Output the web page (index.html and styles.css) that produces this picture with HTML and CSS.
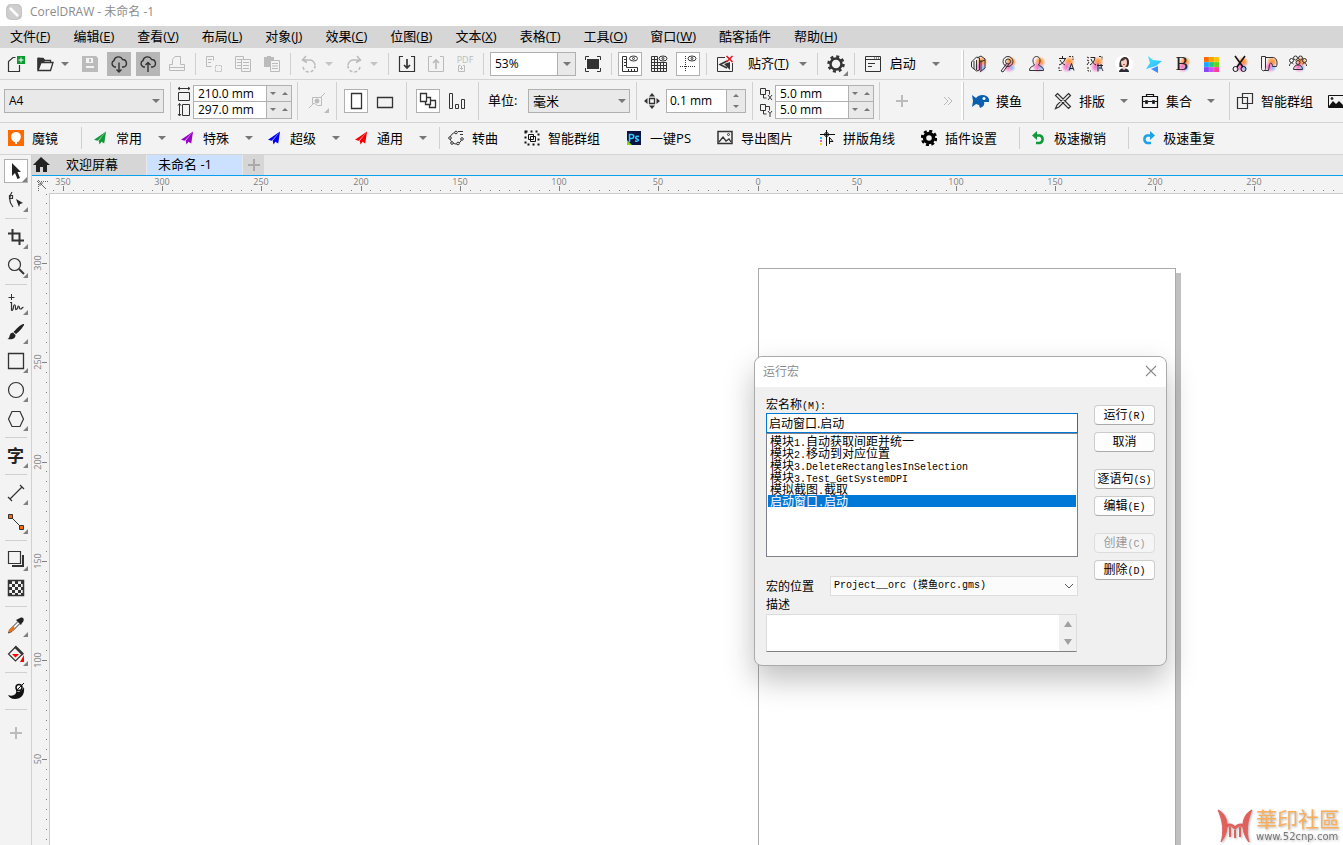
FILE: index.html
```html
<!DOCTYPE html>
<html lang="zh-CN">
  <head>
    <meta charset="utf-8">
    <title>CorelDRAW - 未命名 -1</title>
    <meta name="viewport" content="width=device-width, initial-scale=1.0">
    <link rel="stylesheet" href="styles.css">
  </head>
  <body>
    <svg class="defs" width="0" height="0">
      <defs>
        <radialGradient id="orange"><stop offset="0" stop-color="#ff8a1c"/><stop offset="0.5" stop-color="#ff9c4a" stop-opacity="0.8"/><stop offset="1" stop-color="#ffc08a" stop-opacity="0"/></radialGradient>
        <radialGradient id="pink"><stop offset="0" stop-color="#ff5fb0"/><stop offset="0.5" stop-color="#ff7fd0" stop-opacity="0.7"/><stop offset="1" stop-color="#ff9ce0" stop-opacity="0"/></radialGradient>
        <radialGradient id="blue"><stop offset="0" stop-color="#7cc0ff"/><stop offset="1" stop-color="#b0dcff" stop-opacity="0"/></radialGradient>
        <linearGradient id="sky" x1="0" y1="0" x2="1" y2="1"><stop offset="0" stop-color="#3fe8ff"/><stop offset="1" stop-color="#35b4ff"/></linearGradient>
        <g id="glow">
          <circle cx="12" cy="7" r="6" fill="url(#orange)" stroke="none"/>
          <circle cx="10" cy="12" r="6" fill="url(#pink)" stroke="none"/>
          <circle cx="13" cy="13" r="4" fill="url(#blue)" stroke="none"/>
        </g>
      </defs>
    </svg>

    <header class="title-bar">
      <svg width="16" height="16" viewBox="0 0 16 16"><rect width="16" height="16" rx="5" fill="#c4c4c4"/><path d="M1 12V5l3-4h7l4 3v7l-4 4H5z" fill="#cfcfcf"/><path d="M4 4l8 8" stroke="#fff" stroke-width="2.5"/></svg>
      <h1>CorelDRAW - 未命名 -1</h1>
    </header>

    <nav class="menu">
      <a href="#">文件(<u>F</u>)</a>
      <a href="#">编辑(<u>E</u>)</a>
      <a href="#">查看(<u>V</u>)</a>
      <a href="#">布局(<u>L</u>)</a>
      <a href="#">对象(<u>J</u>)</a>
      <a href="#">效果(<u>C</u>)</a>
      <a href="#">位图(<u>B</u>)</a>
      <a href="#">文本(<u>X</u>)</a>
      <a href="#">表格(<u>T</u>)</a>
      <a href="#">工具(<u>O</u>)</a>
      <a href="#">窗口(<u>W</u>)</a>
      <a href="#">酷客插件</a>
      <a href="#">帮助(<u>H</u>)</a>
    </nav>

    <!-- standard toolbar -->
    <div class="toolbar">
      <button class="tool" aria-label="新建"><svg class="icon" viewBox="0 0 18 18"><path d="M8.500 2.500H6L1.500 6.500V16.500H12.500V10" stroke-width="1.200"/><rect x="10" y="1" width="8" height="8" fill="#0a9a2f" stroke="none"/><path d="M14 2.500v5M11.500 5h5" stroke="#fff"/></svg></button>
      <button class="tool" aria-label="打开"><svg class="icon" viewBox="0 0 18 18"><path d="M2 15V3.500h5l1.500 2h6V7" stroke-width="1.300"/><path d="M2 15.500L5 7.500h12L14.500 15.500z" stroke-width="1.300"/><path d="M2 3v11l3-7h3V4z" fill="#333"/></svg></button>
      <button class="drop" aria-label="打开选项"></button>
      <button class="tool off" aria-label="保存"><svg class="icon" viewBox="0 0 18 18"><path d="M1 1h14l2 2v14H1z" fill="#bbb" stroke="none"/><path d="M5 3h7v5H5zM5 11h8v6H5z" fill="#f3f3f3" stroke="none"/><path d="M9 4v3" stroke="#bbb" stroke-width="2"/><path d="M5 13h8v4H5z" fill="#bbb" stroke="none"/></svg></button>
      <button class="tool pressed" aria-label="从云下载"><svg class="icon" viewBox="0 0 18 18"><path d="M6 12H4.500A3.500 3.500 0 0 1 4 5.500 4.500 4.500 0 0 1 12.500 4.500 3.800 3.800 0 0 1 13.500 12H12M9 7.500V17M6.500 14.500L9 17l2.500-2.500" stroke-width="1.400"/></svg></button>
      <button class="tool pressed" aria-label="保存到云"><svg class="icon" viewBox="0 0 18 18"><path d="M6 12H4.500A3.500 3.500 0 0 1 4 5.500 4.500 4.500 0 0 1 12.500 4.500 3.800 3.800 0 0 1 13.500 12H12M9 17V7.500M6.500 10L9 7.500l2.500 2.500" stroke-width="1.400"/></svg></button>
      <button class="tool off" aria-label="打印"><svg class="icon" viewBox="0 0 18 18"><path d="M4.500 9.500v-5l2.500-3h5.500v8h4v6h-15v-6zM1.500 12.500h15"/></svg></button>
      <span class="sep"></span>
      <button class="tool off" aria-label="剪切"><svg class="icon" viewBox="0 0 18 18"><path d="M1.500 1.500h7v4M1.500 1.500v10h5M3 4.500h4M3 7.500h3"/><path d="M10.500 10.500h6v6h-6z" stroke-dasharray="2 1"/></svg></button>
      <button class="tool off" aria-label="复制"><svg class="icon" viewBox="0 0 18 18"><path d="M7.500 13.500h-6v-12h8v3M3 4.500h5M3 7.500h4M3 10.500h4M7.500 4.500h9v12h-9zM9 7.500h6M9 10.500h6M9 13.500h6"/></svg></button>
      <button class="tool off" aria-label="粘贴"><svg class="icon" viewBox="0 0 18 18"><path d="M1 2h3V1h4v1h3v4H7v6H1z" fill="#bbb" stroke="none"/><path d="M7.500 5.500h9v11h-9zM9 8.500h6M9 11h6M9 13.500h6"/></svg></button>
      <span class="sep"></span>
      <button class="tool off" aria-label="撤销"><svg class="icon" viewBox="0 0 18 18"><path d="M6 1L2.500 5 7 7.500M3 5h6a5.500 5.500 0 0 1 6 5" stroke-width="1.500"/><path d="M15 10.500a6 6 0 0 1-12 1" stroke-width="1.500" stroke-dasharray="3 2"/></svg></button>
      <button class="drop off" aria-label="撤销列表"></button>
      <button class="tool off" aria-label="重做"><svg class="icon" viewBox="0 0 18 18"><path d="M12 1l3.500 4L11 7.500M15 5H9a5.500 5.500 0 0 0-6 5" stroke-width="1.500"/><path d="M3 10.500a6 6 0 0 0 12 1" stroke-width="1.500" stroke-dasharray="3 2"/></svg></button>
      <button class="drop off" aria-label="重做列表"></button>
      <span class="sep"></span>
      <button class="tool" aria-label="导入"><svg class="icon" viewBox="0 0 18 18"><path d="M5 1.500H1.500v15h15v-15H13" stroke-width="1.200"/><path d="M9 4v9M6 10l3 3 3-3" stroke-width="1.700"/></svg></button>
      <button class="tool off" aria-label="导出"><svg class="icon" viewBox="0 0 18 18"><path d="M5 1.500H1.500v15h15v-15H13"/><path d="M9 14V5M6 8l3-3 3 3" stroke-width="1.700"/></svg></button>
      <button class="tool off pdf" aria-label="发布为 PDF"><span>PDF</span><svg class="icon" viewBox="0 0 18 9"><path d="M4.500 1.500H2.500v6h6v-6H7M5.500 6V2M4 4.500h3"/></svg></button>
      <span class="sep"></span>
      <div class="zoom-box">
        <input type="text" value="53%" aria-label="缩放级别">
        <button class="drop" aria-label="缩放列表"></button>
      </div>
      <button class="tool" aria-label="全屏预览"><svg class="icon" viewBox="0 0 18 18"><rect x="3" y="4" width="12" height="10" fill="#333" stroke="none"/><path d="M1.500 5V1.500H5M13 1.500h3.500V5M1.500 13v3.500H5M13 16.500h3.500V13"/></svg></button>
      <span class="sep"></span>
      <button class="tool boxed" aria-label="显示标尺"><svg class="icon" viewBox="0 0 18 18"><path d="M1.500 1.500h4v11h11v4h-15zM3 4.500h2M3 7.500h2M3 10.500h2M7.500 14v2M10.500 14v2M13.500 14v2"/><ellipse cx="12.500" cy="3.500" rx="4" ry="2.500"/><circle cx="12.500" cy="3.500" r="1"/></svg></button>
      <button class="tool" aria-label="显示网格"><svg class="icon" viewBox="0 0 18 18"><path d="M1.500 1.500v15h15v-9M4.500 1.500v15M7.500 1.500v15M10.500 7v10M13.500 7v10M1.500 1.500h6M1.500 4.500h6M1.500 7.500h15M1.500 10.500h15M1.500 13.500h15"/><ellipse cx="13" cy="3.500" rx="4" ry="2.500"/><circle cx="13" cy="3.500" r="1"/></svg></button>
      <button class="tool boxed" aria-label="显示辅助线"><svg class="icon" viewBox="0 0 18 18"><path d="M6.500 1v16M1 11.500h16" stroke-dasharray="1 1"/><ellipse cx="13" cy="3.500" rx="4" ry="2.500"/><circle cx="13" cy="3.500" r="1"/></svg></button>
      <span class="sep"></span>
      <button class="tool" aria-label="贴齐关闭"><svg class="icon" viewBox="0 0 18 18"><path d="M9 2.500H1.500v14h15V8"/><path d="M11 6L4 9.500l7 3.500" stroke-width="1.500"/><path d="M8 9l6-2v8z" fill="#333" stroke="none"/><path d="M10.500 1l6 6M16.500 1l-6 6" stroke="#e8111d" stroke-width="1.500"/></svg></button>
      <button class="text snap">贴齐(<u>T</u>)</button>
      <button class="drop" aria-label="贴齐选项"></button>
      <span class="sep"></span>
      <button class="tool fly" aria-label="选项"><svg class="icon" viewBox="0 0 18 18"><circle cx="9" cy="9" r="5.500" stroke-width="2.500"/><circle cx="9" cy="9" r="7.500" stroke-width="2.500" stroke-dasharray="3 2.890"/></svg></button>
      <span class="sep"></span>
      <button class="tool" aria-label="启动器"><svg class="icon" viewBox="0 0 18 18"><path d="M1.500 1.500h15v15h-15zM1.500 4.500h15M4 8.500h7M4 11.500h4"/><path d="M10 3h1M12 3h1M14 3h1"/></svg></button>
      <button class="text launch">启动</button>
      <button class="drop" aria-label="启动选项"></button>
      <div class="dock">
        <button class="tool" aria-label="盒子"><svg class="icon" viewBox="0 0 18 18"><use href="#glow"/><path d="M1.500 7l5-5 3 1v12l-3 1-5-4zM4 6v8M6.500 5v10M7 3l4-2 4 3v9l-5 4M11 5v11M15 5l-5 2"/></svg></button>
        <button class="tool" aria-label="搜图"><svg class="icon" viewBox="0 0 18 18"><use href="#glow"/><circle cx="9" cy="6.500" r="5"/><circle cx="9" cy="6.500" r="2.500"/><path d="M8 8l-6 8 2 1 6-8"/></svg></button>
        <button class="tool" aria-label="头像"><svg class="icon" viewBox="0 0 18 18"><use href="#glow"/><path d="M6.500 10C4 7 4.500 1.500 8.500 1.500S13 7 10.500 10c0 1 5 1 5 5.500h-14c0-4.500 5-4.500 5-5.500z"/></svg></button>
        <button class="tool" aria-label="翻译"><svg class="icon" viewBox="0 0 18 18"><use href="#glow"/><path d="M2 3.500h7M5.500 1v2.500M8 4c-1 3-3 5-6 6M3 5c1 2 3 4 5 5M12 15.500l2.500-7 2.500 7M13 13.500h3" stroke="#222"/><path d="M2 12v3.500h3M12 1.500h4V5" stroke-dasharray="2 1"/></svg></button>
        <button class="tool" aria-label="汉字转换"><svg class="icon" viewBox="0 0 18 18"><use href="#glow"/><path d="M1 2l2 1M1 5l2 1M1 10l2-3M4.500 2.500H9C8.500 6 7 8 4 10M5 4c1 3 3 5 5 6M11 10.500h6M12 8.500v8M15 9c0 3 1 5 2 7M13 13h2" stroke="#222"/><path d="M2 12v4h3M13 1.500h3V5" stroke-dasharray="2 1"/></svg></button>
        <button class="tool" aria-label="人像"><svg class="icon" viewBox="0 0 18 18"><circle cx="9" cy="9" r="9" fill="#fff" stroke="none"/><path d="M4.500 12C3 0 15-1 14 8c0 2-1 4-2 4z" fill="#3a2b2b" stroke="none"/><path d="M4 17c0-5 10-5 10 0z" fill="#2b2b35" stroke="none"/><path d="M8 10h2.500v4L9 15l-1.500-1z" fill="#f3cdbf" stroke="none"/><ellipse cx="9" cy="7.500" rx="3" ry="4" fill="#f3cdbf" stroke="none"/><path d="M6 6c2 0 4-1 4.500-3L6 4z" fill="#3a2b2b" stroke="none"/><path d="M8 9.500h2" stroke="#d0505a"/></svg></button>
        <button class="tool" aria-label="飞鸟"><svg class="icon" viewBox="0 0 18 18"><path d="M4 1l5 4 9 1-6 5-10 3 4-6z" fill="url(#sky)" stroke="none"/><path d="M7 14l7-3 0 7z" fill="#3f8cff" stroke="none"/></svg></button>
        <button class="tool bold-b" aria-label="加粗"><span>B</span><svg class="icon" viewBox="0 0 18 18"><use href="#glow"/></svg></button>
        <button class="tool" aria-label="色板"><svg class="icon" viewBox="0 0 18 18"><g stroke="none"><path d="M2 2h5v5H2z" fill="#ff6a00"/><path d="M7 2h5v5H7z" fill="#ffa200"/><path d="M12 2h5v5h-5z" fill="#ffc400"/><path d="M2 7h5v5H2z" fill="#1aa8ff"/><path d="M7 7h5v5H7z" fill="#1ecb7a"/><path d="M12 7h5v5h-5z" fill="#62d21c"/><path d="M2 12h5v5H2z" fill="#8b45ff"/><path d="M7 12h5v5H7z" fill="#d44cff"/><path d="M12 12h5v5h-5z" fill="#ff3d9a"/></g><path d="M7 2v15M12 2v15M2 7h15M2 12h15" stroke="#fff" stroke-opacity="0.400" stroke-width="0.500"/></svg></button>
        <button class="tool" aria-label="裁剪"><svg class="icon" viewBox="0 0 18 18"><use href="#glow"/><path d="M4 1l8 11M14 1L6 12" stroke="#111" stroke-width="1.600"/><circle cx="4.500" cy="14" r="2.500" stroke="#111"/><circle cx="12.500" cy="14" r="2.500" stroke="#111"/></svg></button>
        <button class="tool" aria-label="卷轴"><svg class="icon" viewBox="0 0 18 18"><use href="#glow"/><path d="M1.500 1.500h4v12c0 3-4 3-4 0zM5.500 2.500h8c4 1 4 6 3 9h-4c0-3-2-5-3-2l-1 6H4"/></svg></button>
        <button class="tool" aria-label="社群"><svg class="icon" viewBox="0 0 18 18"><use href="#glow"/><circle cx="2.500" cy="5.500" r="2"/><circle cx="15.500" cy="5.500" r="2"/><circle cx="6.500" cy="3" r="2"/><circle cx="11.500" cy="3" r="2"/><circle cx="9" cy="7.500" r="2"/><path d="M4.500 14.500c0-6 9-6 9 0zM0.500 11c0-3 2-4 4-2M17.500 11c0-3-2-4-4-2"/></svg></button>
      </div>
    </div>

    <!-- property bar -->
    <div class="toolbar property">
      <div class="combo paper">
        <select aria-label="页面大小"><option>A4</option></select>
      </div>
      <span class="sep"></span>
      <div class="pair">
        <label for="pageWidth"><svg class="icon" viewBox="0 0 14 16"><path d="M1 2.500h12M3 1L1 2.500 3 4M11 1l2 1.500L11 4M1.500 6.500h11v8h-11z"/></svg></label>
        <input type="text" id="pageWidth" value="210.0 mm">
        <div class="spin"><button class="down" aria-label="减小宽度"></button><button class="up" aria-label="增大宽度"></button></div>
        <label for="pageHeight"><svg class="icon" viewBox="0 0 14 16"><path d="M2.500 1.500v12M1 3.500l1.500-2L4 3.500M1 12l1.500 2L4 12M5.500 2.500h7v11h-7z"/></svg></label>
        <input type="text" id="pageHeight" value="297.0 mm">
        <div class="spin"><button class="down" aria-label="减小高度"></button><button class="up" aria-label="增大高度"></button></div>
      </div>
      <span class="sep"></span>
      <button class="tool off fly treat" aria-label="对象设置"><svg class="icon" viewBox="0 0 18 18"><path d="M4.500 5.500h9v8h-4l-3-2h-2zM1 16l4-4M13 5l4-4"/><circle cx="9" cy="9" r="2" fill="#bbb"/></svg></button>
      <span class="sep"></span>
      <button class="tool boxed portrait" aria-label="纵向"><svg class="icon" viewBox="0 0 18 18"><path d="M4.500 1.500h10v15h-10z" stroke-width="1.300"/></svg></button>
      <button class="tool" aria-label="横向"><svg class="icon" viewBox="0 0 18 18"><path d="M1.500 5.500h15v10h-15z" stroke-width="1.300"/></svg></button>
      <span class="sep group-end"></span>
      <button class="tool boxed" aria-label="所有页面"><svg class="icon" viewBox="0 0 18 18"><path d="M1.500 1.500h6v8h-6zM7.500 5.500h4v7h-5v-3M11.500 8.500h5v7h-6v-3" stroke-width="1.300"/></svg></button>
      <button class="tool" aria-label="当前页面"><svg class="icon" viewBox="0 0 18 18"><path d="M1.500 1.500h3v15h-3zM7.500 12.500h3v4h-3zM13.500 7.500h3v9h-3z"/></svg></button>
      <span class="sep group-end"></span>
      <label for="unit" class="unit-label">单位:</label>
      <div class="combo unit">
        <select id="unit"><option>毫米</option></select>
      </div>
      <span class="sep"></span>
      <label for="nudge" aria-label="微调距离"><svg class="icon" viewBox="0 0 18 18"><path d="M6.500 6.500h5v5h-5z" stroke-width="1.300"/><path d="M9 1L6 4.500h6zM9 17l-3-3.500h6zM1 9l3.500-3v6zM17 9l-3.500-3v6z" fill="#333" stroke="none"/></svg></label>
      <div class="nudge">
        <input type="text" id="nudge" value="0.1 mm">
        <div class="spin stacked"><button class="up" aria-label="增大微调"></button><button class="down" aria-label="减小微调"></button></div>
      </div>
      <span class="sep"></span>
      <div class="pair">
        <label for="dupX"><svg class="icon" viewBox="0 0 14 16"><path d="M1.500 2.500h5v6h-5zM7 4.500h3.500v4M4.500 9v3h3M9 9l4 5M13 9l-4 5"/></svg></label>
        <input type="text" id="dupX" value="5.0 mm">
        <div class="spin"><button class="down" aria-label="减小 X"></button><button class="up" aria-label="增大 X"></button></div>
        <label for="dupY"><svg class="icon" viewBox="0 0 14 16"><path d="M1.500 2.500h5v6h-5zM7 4.500h3.500v4M4.500 9v3h3M9 9l2 2.500L13 9M11 11.500V15"/></svg></label>
        <input type="text" id="dupY" value="5.0 mm">
        <div class="spin"><button class="down" aria-label="减小 Y"></button><button class="up" aria-label="增大 Y"></button></div>
      </div>
      <span class="sep"></span>
      <button class="tool off plus" aria-label="添加"><svg class="icon" viewBox="0 0 18 18"><path d="M9 3v12M3 9h12" stroke-width="2"/></svg></button>
      <button class="tool off more" aria-label="更多"><svg class="icon" viewBox="0 0 18 18"><path d="M5 5l4 4-4 4M9 5l4 4-4 4"/></svg></button>
      <div class="dock plugins">
        <button class="text"><svg class="icon" viewBox="0 0 18 18"><path d="M1 3l4 3c3-4 11-4 13 1v3h-5c1 3-1 5-4 6l-1-3-3-1-4 3 1-6z" fill="#0a5fae" stroke="none"/><circle cx="13" cy="6.500" r="1.500" fill="#fff" stroke="none"/></svg>摸鱼</button>
        <span class="sep fish-end"></span>
        <button class="text"><svg class="icon" viewBox="0 0 18 18"><path d="M3.500 1.500l13 13-2 2-13-13zM14.500 1.500l2 2L5 15l-3.500 1.500L3 13z" stroke-width="1.200"/></svg>排版</button>
        <button class="drop wide" aria-label="排版选项"></button>
        <button class="text"><svg class="icon" viewBox="0 0 18 18"><path d="M5.500 4.500v-2h7v2M1.500 4.500h15v11h-15zM1.500 9.500h15" stroke="#111" stroke-width="1.200"/><path d="M4.500 8.500h2v3h-2zM11.500 8.500h2v3h-2z" fill="#111"/></svg>集合</button>
        <button class="drop wide" aria-label="集合选项"></button>
        <span class="sep"></span>
        <button class="text"><svg class="icon" viewBox="0 0 18 18"><path d="M6.500 1.500h10v10h-10zM1.500 5.500h10v11h-10z" stroke-width="1.200"/></svg>智能群组</button>
        <button class="text picture" aria-label="图片"><svg class="icon" viewBox="0 0 18 18"><path d="M1.500 3.500h15v12h-15z" stroke="#111"/><path d="M2 14l4-5 3 3 3-3 5 5v1H2z" fill="#111" stroke="none"/><circle cx="5" cy="6.500" r="1" fill="#111"/></svg></button>
      </div>
    </div>

    <!-- plugin toolbar -->
    <div class="toolbar plugin">
      <button class="text"><svg class="icon" viewBox="0 0 16 16"><path d="M0 0h16v16H0z" fill="#ff6a00" stroke="none"/><path d="M8 2c5 0 7 6 2 10H6C1 8 3 2 8 2zM7 12h2v2H7z" fill="#fff" stroke="none"/></svg>魔镜</button>
      <span class="sep mirror-end"></span>
      <button class="text plane green"><svg viewBox="0 0 14 14"><path d="M13 0L0 9l4 1zM13 0L5 10l1 4 2-3 3 2z"/></svg>常用</button>
      <button class="drop wide" aria-label="常用选项"></button>
      <button class="text plane purple"><svg viewBox="0 0 14 14"><path d="M13 0L0 9l4 1zM13 0L5 10l1 4 2-3 3 2z"/></svg>特殊</button>
      <button class="drop wide" aria-label="特殊选项"></button>
      <button class="text plane navy"><svg viewBox="0 0 14 14"><path d="M13 0L0 9l4 1zM13 0L5 10l1 4 2-3 3 2z"/></svg>超级</button>
      <button class="drop wide" aria-label="超级选项"></button>
      <button class="text plane red"><svg viewBox="0 0 14 14"><path d="M13 0L0 9l4 1zM13 0L5 10l1 4 2-3 3 2z"/></svg>通用</button>
      <button class="drop wide" aria-label="通用选项"></button>
      <span class="sep"></span>
      <div class="actions">
        <button class="text"><svg class="icon" viewBox="0 0 16 16"><path d="M8 2.500a5.500 5.500 0 0 0 0 11.500 5.500 5.500 0 0 0 5.500-6M10 1.500h5M12 4.500h3"/><g fill="#fff"><circle cx="8" cy="2.500" r="1.300"/><circle cx="2" cy="8" r="1.300"/><circle cx="4" cy="13" r="1.300"/><circle cx="10" cy="13.500" r="1.300"/><circle cx="14" cy="9" r="1.300"/></g></svg>转曲</button>
        <button class="text"><svg class="icon" viewBox="0 0 16 16"><path d="M1.500 1.500h13v13h-13z" stroke="#111" stroke-width="2" stroke-dasharray="2 3"/><path d="M4.500 4.500h5v5h-5zM6.500 6.500h5v5h-5z" stroke="#111"/></svg>智能群组</button>
        <button class="text"><svg class="icon" viewBox="0 0 16 16"><path d="M1 1h14v14H1z" fill="#0b1440" stroke="none"/><path d="M1 10l5 5H1z" fill="#7ed321" stroke="none"/><path d="M3.500 12V4.500h2c3 0 3 4 0 4h-2M13 6.500c-4-1-4 2-2 2.500s2 3-2 2" stroke="#35c5ff" stroke-width="1.500"/></svg>一键PS</button>
        <button class="text"><svg class="icon" viewBox="0 0 16 16"><path d="M1 1.500h14v12H1z" stroke-width="1.500"/><path d="M2 12l4-5 3 4 3-2 2 3" stroke-width="1.300"/><circle cx="11.500" cy="4.500" r="1"/></svg>导出图片</button>
        <button class="text"><svg class="icon" viewBox="0 0 16 16"><path d="M7.500 0v16M1 4.500h15" stroke="#111"/><circle cx="7.500" cy="4.500" r="2" stroke="#111"/><path d="M10.500 7v7M10.500 7.500l3.500 4h-3" stroke="#111"/><path d="M1 7h2v2H1z" fill="#25c5e8" stroke="none"/><path d="M1 10h2v2H1z" fill="#f05ab0" stroke="none"/><path d="M1 13h2v2H1z" fill="#ffd21c" stroke="none"/></svg>拼版角线</button>
        <button class="text"><svg class="icon" viewBox="0 0 16 16"><circle cx="8" cy="8" r="4.500" stroke="#000" stroke-width="3.500"/><circle cx="8" cy="8" r="7" stroke="#000" stroke-width="2.500" stroke-dasharray="3 2.500"/></svg>插件设置</button>
      </div>
      <span class="sep fast"></span>
      <button class="text quick"><svg class="icon" viewBox="0 0 14 14"><path d="M2 4.500h6a4 4 0 0 1 0 7.500H4" stroke="#119a3b" stroke-width="2.500"/><path d="M0 4.500L5 0v9z" fill="#119a3b" stroke="none"/></svg>极速撤销</button>
      <span class="sep fast"></span>
      <button class="text quick"><svg class="icon" viewBox="0 0 14 14"><path d="M12 4.500H6A4 4 0 0 0 6 12h4" stroke="#1aa3e8" stroke-width="2.500"/><path d="M14 4.500L9 0v9z" fill="#1aa3e8" stroke="none"/></svg>极速重复</button>
    </div>

    <main class="workspace">
      <aside class="toolbox">
        <button class="tool boxed fly" aria-label="选择"><svg class="icon" viewBox="0 0 18 18"><path d="M5 1v13l3-3 2.500 6 2.500-1-2.500-6H14z" fill="#222" stroke="none"/></svg></button>
        <button class="tool fly" aria-label="形状"><svg class="icon" viewBox="0 0 18 18"><path d="M5 1C1.500 6 2 11 6 16M2.500 4.500h3v3h-3z" stroke-width="1.200"/><path d="M9 8l7 4-3 1-1 3z" fill="#222" stroke="none"/></svg></button>
        <span class="rule"></span>
        <button class="tool fly" aria-label="裁剪"><svg class="icon" viewBox="0 0 18 18"><path d="M5.500 1v11.500H17M1 5.500h11.500V17" stroke-width="2"/></svg></button>
        <button class="tool fly" aria-label="缩放"><svg class="icon" viewBox="0 0 18 18"><circle cx="7.500" cy="7.500" r="6" stroke-width="1.200"/><path d="M12 12l5 5" stroke-width="2"/></svg></button>
        <span class="rule"></span>
        <button class="tool fly" aria-label="手绘"><svg class="icon" viewBox="0 0 18 18"><path d="M4.500 0v6M1.500 3.500h6"/><path d="M3 8.500h1.500V16c0 1 2 0 2-3s2-3 2 0 0 3 1.500 2 0-3 1.500-3 0 3 2 3 1-2 3-1.500" stroke-width="1.200"/></svg></button>
        <button class="tool fly" aria-label="艺术笔"><svg class="icon" viewBox="0 0 18 18"><path d="M17 1c1 1-5 8-8 10L6.500 9C9 6 15 0 17 1zM6 9.500L8.500 12c0 4-4 5-8 4 3-1 1-6 5.500-6.500z" fill="#222" stroke="none"/></svg></button>
        <button class="tool fly" aria-label="矩形"><svg class="icon" viewBox="0 0 18 18"><path d="M1.500 1.500h15v15h-15z" stroke-width="1.300"/></svg></button>
        <button class="tool fly" aria-label="椭圆形"><svg class="icon" viewBox="0 0 18 18"><circle cx="9" cy="9" r="7.500" stroke-width="1.200"/></svg></button>
        <button class="tool fly" aria-label="多边形"><svg class="icon" viewBox="0 0 18 18"><path d="M5 1.500h8L16.500 9 13 16.500H5L1.500 9z" stroke-width="1.200"/></svg></button>
        <span class="rule"></span>
        <button class="tool fly glyph" aria-label="文本">字</button>
        <span class="rule"></span>
        <button class="tool fly" aria-label="平行度量"><svg class="icon" viewBox="0 0 18 18"><path d="M3 15L15 3M1 13l4 4M13 1l4 4" stroke-width="1.200"/></svg></button>
        <button class="tool fly" aria-label="连接器"><svg class="icon" viewBox="0 0 18 18"><path d="M4 4l10 10"/><path d="M1.500 1.500h4v4h-4zM12.500 12.500h4v4h-4z" fill="#ff6a00"/></svg></button>
        <span class="rule"></span>
        <button class="tool fly" aria-label="阴影"><svg class="icon" viewBox="0 0 18 18"><path d="M16 5v11H5" stroke-width="2"/><path d="M1.500 1.500h12v12h-12z" fill="#f3f3f3" stroke-width="1.200"/></svg></button>
        <button class="tool" aria-label="透明度"><svg class="icon" viewBox="0 0 18 18"><path d="M1.500 1.500h15v15h-15z" stroke-width="1.500"/><path d="M2 3.500h14M2 9.500h14M2 15.500h14" stroke-width="3" stroke-dasharray="3"/><path d="M5 6.500h12M5 12.500h12" stroke-width="3" stroke-dasharray="3"/></svg></button>
        <span class="rule"></span>
        <button class="tool fly" aria-label="颜色滴管"><svg class="icon" viewBox="0 0 18 18"><path d="M11 5.500L3 13.500 1.500 17 5 15.500l8-8"/><path d="M2 16l5-5" stroke="#f0700f" stroke-width="2.500"/><path d="M9 4l5 5 1-2c3-2 2-7-2-5l-2 1z" fill="#222" stroke="none"/></svg></button>
        <button class="tool fly" aria-label="交互式填充"><svg class="icon" viewBox="0 0 18 18"><path d="M8.500 2L1.500 9l7 7 7-7z" stroke-width="1.200"/><path d="M8 1.500l8 8" stroke-width="2.500"/><path d="M5 9h7l-3.500 3.500zM17 10v7h-4z" fill="#f00" stroke="none"/></svg></button>
        <span class="rule"></span>
        <button class="tool" aria-label="智能绘图"><svg class="icon" viewBox="0 0 18 18"><path d="M17 5c1 8-3 12-9 12-4 0-6-2-7-4 5 2 9-1 8-4l3 1c2-1 4-3 5-5z" fill="#111" stroke="none"/><circle cx="12" cy="5.500" r="3" stroke="#111" stroke-width="1.500"/><path d="M9 9l8-8" stroke="#111"/></svg></button>
        <span class="rule"></span>
        <button class="tool off add" aria-label="自定义"><svg class="icon" viewBox="0 0 18 18"><path d="M9 3v12M3 9h12" stroke-width="2"/></svg></button>
      </aside>

      <section class="documents">
        <div class="tabs">
          <button class="home" aria-label="主页"><svg viewBox="0 0 18 18" width="18" height="18"><path d="M9 1L1 9h3v7h4v-5h3v5h4V9h3z" fill="#222"/></svg></button>
          <button class="tab">欢迎屏幕</button>
          <button class="tab active">未命名 -1</button>
          <button class="new-tab" aria-label="新建文档"><svg viewBox="0 0 12 12" width="12" height="12"><path d="M6 0v12M0 6h12" stroke="#aaa" stroke-width="2"/></svg></button>
        </div>
        <div class="drawing">
          <div class="corner"><svg class="icon" viewBox="0 0 12 12"><path d="M1 2.500h11M2.500 1v11" stroke-dasharray="1 1"/><path d="M4 7V4h3M4 4l6 6"/></svg></div>
          <svg class="ruler" id="rulerTop"></svg>
          <svg class="ruler" id="rulerSide"></svg>
          <div class="canvas">
            <div class="page"></div>

            <form class="dialog">
              <div class="dialog-title">
                <span>运行宏</span>
                <button type="button" aria-label="关闭"><svg viewBox="0 0 12 12" width="12" height="12"><path d="M1 1l10 10M11 1L1 11" stroke="#888" stroke-width="1.100"/></svg></button>
              </div>
              <div class="dialog-body">
                <div class="fields">
                  <label for="macroName">宏名称<span class="en">(M):</span></label>
                  <input type="text" id="macroName" value="启动窗口.启动">
                  <ul class="macros" role="listbox" aria-label="宏">
                    <li role="option">模块<span class="en">1.</span>自动获取间距并统一</li>
                    <li role="option">模块<span class="en">2.</span>移动到对应位置</li>
                    <li role="option">模块<span class="en">3.DeleteRectanglesInSelection</span></li>
                    <li role="option">模块<span class="en">3.Test_GetSystemDPI</span></li>
                    <li role="option">模拟截图<span class="en">.</span>截取</li>
                    <li role="option" class="selected" aria-selected="true">启动窗口<span class="en">.</span>启动</li>
                  </ul>
                  <div class="place">
                    <label for="macroPlace">宏的位置</label>
                    <div class="place-box">
                      <select id="macroPlace"><option>Project__orc (摸鱼orc.gms)</option></select>
                      <svg viewBox="0 0 10 6" width="10" height="6"><path d="M1 1l4 4 4-4" fill="none" stroke="#555"/></svg>
                    </div>
                  </div>
                  <label for="macroNote">描述</label>
                  <div class="note">
                    <textarea id="macroNote" readonly></textarea>
                    <div class="scroll">
                      <button type="button" class="up" aria-label="向上"></button>
                      <button type="button" class="down" aria-label="向下"></button>
                    </div>
                  </div>
                </div>
                <div class="commands">
                  <button type="button">运行<span class="en">(R)</span></button>
                  <button type="button">取消</button>
                  <button type="button" class="group">逐语句<span class="en">(S)</span></button>
                  <button type="button">编辑<span class="en">(E)</span></button>
                  <button type="button" class="group" disabled>创建<span class="en">(C)</span></button>
                  <button type="button">删除<span class="en">(D)</span></button>
                </div>
              </div>
            </form>

            <div class="site">
              <svg viewBox="0 0 36 36" width="36" height="36"><path d="M1 2c11 5 12 21 3 32 3-9 2-22-3-32zM35 2c-11 5-12 21-3 32-3-9-2-22 3-32z" fill="#e0605c" stroke="#e0605c"/><path d="M9 18c4-2 6-1 9 2 3-3 5-4 9-2" fill="none" stroke="#e0605c" stroke-width="3"/><path d="M13 19v10M23 19v10M18 22v8" fill="none" stroke="#e0605c" stroke-width="2"/></svg>
              <div>
                <strong>華印社區</strong>
                <span>www.52cnp.com</span>
              </div>
            </div>
          </div>
        </div>
      </section>
    </main>

    <script>
      var svgNS = "http://www.w3.org/2000/svg";
      var step = 9.925; // pixels for 5 mm

      function addShape(parent, name, attrs) {
        var el = document.createElementNS(svgNS, name);
        for (var key in attrs) {
          el.setAttribute(key, attrs[key]);
        }
        parent.appendChild(el);
        return el;
      }

      // zero is the distance from the start of the ruler to its 0 mark
      function drawRuler(id, zero, vertical) {
        var ruler = document.getElementById(id);
        var box = ruler.getBoundingClientRect();
        var length = vertical ? box.height : box.width;
        ruler.innerHTML = "";
        for (var i = Math.ceil(-zero / step); zero + i * step < length; i++) {
          var pos = Math.floor(zero + i * step);
          var major = i % 10 == 0;
          var size = major ? 5 : 1;
          if (vertical) {
            addShape(ruler, "rect", {x: 15 - size, y: pos, width: size, height: 1});
          } else {
            addShape(ruler, "rect", {x: pos, y: 15 - size, width: 1, height: size});
          }
          if (major) {
            var attrs = {x: pos, y: 9};
            if (vertical) {
              attrs = {x: 0, y: 0, transform: "translate(9 " + pos + ") rotate(-90)"};
            }
            addShape(ruler, "text", attrs).textContent = Math.abs(i * 5);
          }
        }
      }

      function drawRulers() {
        drawRuler("rulerTop", 709, false);
        drawRuler("rulerSide", 666, true);
      }

      drawRulers();
      window.addEventListener("resize", drawRulers);
    </script>
  </body>
</html>
```

FILE: styles.css
```css
* {
  box-sizing: border-box;
}
body {
  display: flex;
  flex-direction: column;
  height: 100vh;
  margin: 0;
  overflow: hidden;
  background-color: #f3f3f3;
  color: #000;
  font-family: "Open Sans", "Noto Sans CJK SC", sans-serif;
  font-size: 13px;
  line-height: 18px;
}
button, input, select, textarea {
  margin: 0;
  padding: 0;
  border: none;
  border-radius: 0;
  background: none;
  color: inherit;
  font: inherit;
}
select {
  appearance: none;
}
.defs {
  position: absolute;
}
.icon {
  display: block;
  flex: none;
  width: 18px;
  height: 18px;
  fill: none;
  stroke: #333;
}

/* title and menu */
.title-bar {
  display: flex;
  flex: none;
  align-items: center;
  gap: 8px;
  height: 26px;
  padding: 0 0 2px 6px;
  background-color: #fff;
}
.title-bar h1 {
  margin: 0;
  color: #8c8c8c;
  font-size: 12px;
  font-weight: normal;
}
.menu {
  display: flex;
  flex: none;
  align-items: center;
  gap: 23px;
  height: 22px;
  padding: 0 0 2px 10px;
  background-color: #d6d6d6;
  white-space: nowrap;
}
.menu a {
  color: #000;
  text-decoration: none;
}

/* toolbars */
.toolbar {
  display: flex;
  flex: none;
  align-items: center;
  gap: 5px;
  height: 32px;
  padding-left: 4px;
  border-bottom: 1px solid #d4d4d4;
  white-space: nowrap;
  overflow: hidden;
}
.toolbar > * {
  flex: none;
}
.property {
  height: 43px;
}
.tool {
  position: relative;
  display: flex;
  flex: none;
  align-items: center;
  justify-content: center;
  width: 24px;
  height: 24px;
}
.pressed {
  background-color: #b6b6b6;
}
.boxed {
  border: 1px solid #b0b0b0;
  background-color: #fff;
}
.off .icon {
  stroke: #bbb;
}
.fly::after {
  content: "";
  position: absolute;
  right: 0;
  bottom: 0;
  border-left: 5px solid transparent;
  border-bottom: 5px solid #808080;
}
.off.fly::after {
  border-bottom-color: #bbb;
}
.sep {
  width: 3px;
  height: 22px;
  background: linear-gradient(#d0d0d0, #d0d0d0) center / 1px 100% no-repeat;
}
.property .sep {
  height: 38px;
}
.drop {
  display: flex;
  align-items: center;
  justify-content: center;
  width: 16px;
  height: 24px;
  margin-left: -5px;
}
.drop::after {
  content: "";
  border: 4px solid transparent;
  border-top-color: #777;
  border-bottom: none;
}
.drop.off::after {
  border-top-color: #c4c4c4;
}
.drop.wide {
  width: 24px;
  margin-left: 3px;
}
.pdf {
  flex-direction: column;
  color: #bbb;
  font-size: 9px;
  line-height: 9px;
}
.pdf .icon {
  height: 9px;
}
.text {
  display: flex;
  align-items: center;
  gap: 7px;
}
.snap {
  gap: 0;
  padding: 0 6px 2px;
}
.launch {
  padding: 0 12px 2px 0;
}
.zoom-box {
  display: flex;
  width: 86px;
  height: 24px;
  border: 1px solid #b0b0b0;
  background-color: #fff;
}
.zoom-box input {
  flex: 1;
  min-width: 0;
  padding-left: 4px;
  font-size: 12px;
}
.zoom-box .drop {
  width: 18px;
  height: 22px;
  margin: 0;
  border-left: 1px solid #b0b0b0;
  background-color: #e9e9e9;
}
.dock {
  display: flex;
  align-items: center;
  gap: 5px;
  height: 28px;
  margin-left: 12px;
  padding-left: 4px;
  border-left: 2px solid #fff;
  box-shadow: inset 1px 0 0 #ccc;
}
.dock > * {
  flex: none;
}
.bold-b span {
  position: absolute;
  z-index: 1;
  font: 19px/18px "Liberation Serif", serif;
  color: #222;
}

/* property bar */
.combo {
  position: relative;
  height: 24px;
}
.combo select {
  width: 100%;
  height: 100%;
  padding-left: 4px;
  border: 1px solid #b0b0b0;
  background-color: #e9e9e9;
}
.combo::after {
  content: "";
  position: absolute;
  top: 10px;
  right: 4px;
  border: 4px solid transparent;
  border-top-color: #777;
  border-bottom: none;
}
.paper {
  width: 160px;
}
.paper select {
  font-size: 12px;
}
.unit {
  width: 102px;
}
.unit-label {
  width: 35px;
  padding-bottom: 2px;
}
.pair {
  display: grid;
  grid-template-columns: 17px 73px 24px;
  grid-auto-rows: 16px;
  margin-top: 1px;
}
.pair .icon {
  width: 14px;
  height: 16px;
}
.pair input {
  min-width: 0;
  padding-left: 4px;
  background-color: #fff;
  box-shadow: 0 0 0 1px #b0b0b0;
  font-size: 12px;
}
.spin {
  display: flex;
  background-color: #e9e9e9;
  box-shadow: 0 0 0 1px #b0b0b0;
}
.spin button {
  display: flex;
  flex: 1;
  align-items: center;
  justify-content: center;
}
.spin button::after, .scroll button::after {
  content: "";
  border: 3px solid transparent;
}
.spin .up::after {
  border-top: none;
  border-bottom-color: #777;
}
.spin .down::after {
  border-bottom: none;
  border-top-color: #777;
}
.stacked {
  flex-direction: column;
  width: 18px;
}
.treat {
  margin: 0 1px;
}
.portrait {
  margin-left: 1px;
}
.group-end {
  margin: 0 3px;
}
.nudge {
  display: flex;
  width: 80px;
  height: 24px;
  border: 1px solid #b0b0b0;
}
.nudge input {
  flex: 1;
  min-width: 0;
  padding-left: 3px;
  background-color: #fff;
  font-size: 12px;
}
.plus {
  margin-left: 4px;
}
.more {
  margin-left: 17px;
}
.plugins {
  height: 38px;
  margin-left: -4px;
  padding-left: 8px;
}
.fish-end {
  margin: 0 4px 0 15px;
}
.plugins .drop.wide {
  margin-left: 2px;
}
.picture {
  margin-left: 9px;
}

/* plugin toolbar */
.plugin {
  padding-bottom: 1px;
}
.plugin .icon {
  width: 16px;
  height: 16px;
}
.plugin .text {
  gap: 8px;
  padding-left: 4px;
}
.mirror-end {
  margin: 0 2px 0 17px;
}
.plugin .plane {
  gap: 9px;
}
.plugin .drop {
  margin-right: -2px;
}
.plane svg {
  width: 13px;
  height: 14px;
}
.green svg {
  fill: #119a3b;
}
.purple svg {
  fill: #9b00c8;
}
.navy svg {
  fill: #0000f5;
}
.red svg {
  fill: #f50000;
}
.actions {
  display: flex;
  gap: 22px;
  margin-left: -2px;
}
.fast {
  margin-left: 16px;
}
.plugin .quick {
  padding-left: 6px;
}
.quick .icon {
  width: 14px;
  height: 14px;
}

/* workspace */
.workspace {
  display: flex;
  flex: 1;
  min-height: 0;
}
.toolbox {
  display: flex;
  flex: none;
  flex-direction: column;
  align-items: center;
  gap: 5px;
  width: 32px;
  padding-top: 4px;
  border-right: 1px solid #d0d0d0;
}
.rule {
  width: 22px;
  height: 3px;
  background: linear-gradient(#d0d0d0, #d0d0d0) center / 100% 1px no-repeat;
}
.glyph {
  font-size: 17px;
  font-weight: bold;
  color: #222;
}
.add {
  margin-top: 5px;
}
.documents {
  display: flex;
  flex: 1;
  flex-direction: column;
  min-width: 0;
}
.tabs {
  display: flex;
  flex: none;
  gap: 1px;
  height: 21px;
  border-bottom: 1px solid #0aa0f0;
  background-color: #e8e8e8;
}
.tabs button {
  display: flex;
  align-items: center;
  justify-content: center;
  background-color: #d6d6d6;
}
.tabs .home {
  width: 18px;
  margin-right: -1px;
}
.tabs .tab {
  justify-content: flex-start;
  width: 96px;
  padding: 0 0 2px 16px;
}
.tabs .active {
  width: 95px;
  padding-left: 11px;
  background-color: #cce0ff;
}
.tabs .new-tab {
  width: 21px;
}
.drawing {
  display: grid;
  flex: 1;
  grid-template-columns: 17px 1fr;
  grid-template-rows: 17px 1fr;
  min-height: 0;
}
.corner {
  padding: 3px 4px;
}
.corner .icon {
  width: 12px;
  height: 12px;
  stroke: #666;
}
.ruler {
  width: 100%;
  height: 100%;
  min-height: 0;
  overflow: hidden;
  fill: #808080;
  font-size: 9px;
  text-anchor: middle;
}
.canvas {
  position: relative;
  min-height: 0;
  border-top: 1px solid #ccc;
  border-left: 1px solid #ccc;
  background-color: #fff;
  overflow: hidden;
}
.page {
  position: absolute;
  top: 74px;
  left: 708px;
  width: 418px;
  height: 590px;
  border: 1px solid #aaa;
  background-color: #fff;
  box-shadow: 5px 5px 0 #c0c0c0;
}

/* run macro dialog */
.dialog {
  position: absolute;
  top: 162px;
  left: 704px;
  width: 413px;
  border: 1px solid #aaa;
  border-radius: 8px;
  background-color: #f0f0f0;
  box-shadow: 0 14px 30px rgba(0, 0, 0, 0.25);
  font-family: "Noto Sans CJK SC", sans-serif;
  font-size: 12px;
  line-height: 18px;
}
.dialog-title {
  display: flex;
  align-items: center;
  justify-content: space-between;
  height: 30px;
  padding: 0 9px 2px 8px;
  border-radius: 8px 8px 0 0;
  background-color: #fff;
  color: #8c8c8c;
}
.dialog-title button {
  display: flex;
}
.dialog-body {
  display: flex;
  gap: 16px;
  padding: 9px 11px 13px;
}
.en {
  font-family: "Liberation Mono", monospace;
  font-size: 10px;
  line-height: 10px;
}
.fields {
  display: flex;
  flex: 1;
  flex-direction: column;
  min-width: 0;
}
.fields > label {
  height: 17px;
  line-height: 16px;
}
.fields input {
  height: 20px;
  padding: 0 2px 2px;
  border: 1px solid #0078d4;
  background-color: #fff;
}
.macros {
  height: 124px;
  margin: 0 0 19px;
  padding: 1px;
  border: 1px solid #7f828c;
  background-color: #fff;
  list-style: none;
}
.macros li {
  height: 12px;
  padding-left: 2px;
  line-height: 12px;
}
.macros .selected {
  background-color: #0078d7;
  color: #fff;
}
.place {
  display: flex;
  align-items: center;
  justify-content: space-between;
}
.place-box {
  display: flex;
  align-items: center;
  width: 248px;
  height: 20px;
  padding: 0 3px;
  border: 1px solid #ddd;
  background-color: #fbfbfb;
}
.place-box select {
  flex: 1;
  font-family: "Liberation Mono", "Noto Sans CJK SC", monospace;
  font-size: 10px;
}
.note {
  display: flex;
  height: 38px;
  margin-top: 1px;
  margin-right: 1px;
  border: 1px solid #ddd;
  border-bottom-color: #808080;
  background-color: #fff;
}
.note textarea {
  flex: 1;
  min-width: 0;
  resize: none;
}
.scroll {
  display: flex;
  flex-direction: column;
  justify-content: space-around;
  width: 17px;
  background-color: #f0f0f0;
}
.scroll button {
  display: flex;
  justify-content: center;
}
.scroll button::after {
  border-width: 4px;
}
.scroll .up::after {
  border-top: none;
  border-bottom: 6px solid #a0a0a0;
}
.scroll .down::after {
  border-top: 6px solid #a0a0a0;
  border-bottom: none;
}
.commands {
  display: flex;
  flex-direction: column;
  gap: 7px;
  width: 61px;
  padding-top: 9px;
}
.commands button {
  height: 20px;
  padding-bottom: 2px;
  border: 1px solid #ccc;
  border-bottom-color: #aaa;
  border-radius: 4px;
  background-color: #fdfdfd;
  line-height: 16px;
  white-space: nowrap;
}
.commands .group {
  margin-top: 10px;
}
.commands button:disabled {
  border-color: #ddd;
  background-color: #f5f5f5;
  color: #999;
}

/* site mark */
.site {
  position: absolute;
  right: 3px;
  bottom: 1px;
  display: flex;
  align-items: center;
  gap: 3px;
  filter: drop-shadow(1px 1px 1px rgba(0, 0, 0, 0.3));
}
.site div {
  display: flex;
  flex-direction: column;
}
.site strong {
  color: #f9ae5c;
  font: 21px/23px "Noto Sans CJK TC", sans-serif;
}
.site span {
  color: #777;
  font: 10px/14px "DejaVu Sans", sans-serif;
}
```
